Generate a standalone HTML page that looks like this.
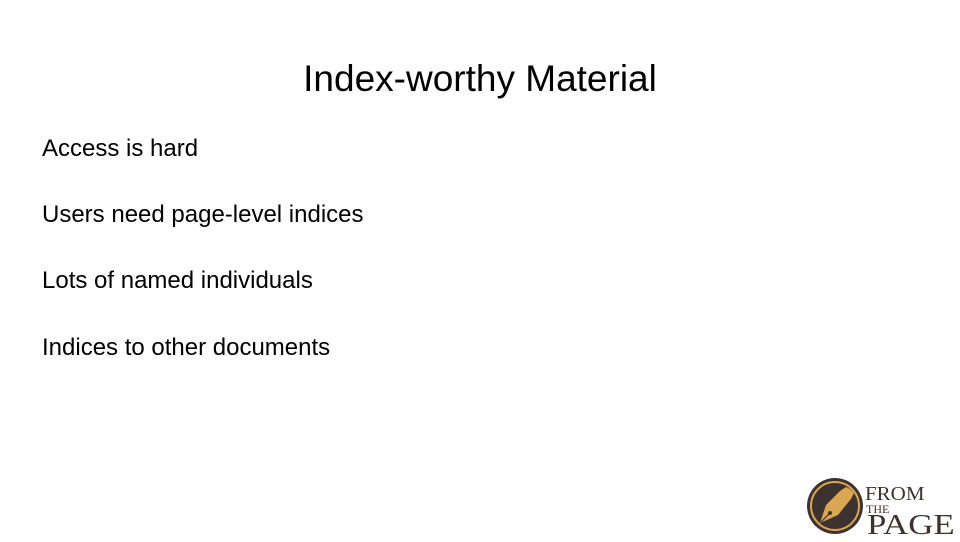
<!DOCTYPE html>
<html><head><style>
body{margin:0;width:960px;height:540px;background:#fff;position:relative;font-family:"Liberation Sans",sans-serif;overflow:hidden}
h1{position:absolute;top:58px;left:0;width:960px;text-align:center;font-weight:normal;font-size:37px;margin:0;color:#000}
.b{position:absolute;left:42px;font-size:24px;color:#000}
.l{position:absolute;font-family:"Liberation Serif",serif;color:#3d3230;font-weight:normal;transform-origin:left top}
</style></head><body>
<h1>Index-worthy Material</h1>
<div class="b" style="top:135px">Access is hard</div>
<div class="b" style="top:201px">Users need page-level indices</div>
<div class="b" style="top:267px">Lots of named individuals</div>
<div class="b" style="top:334px">Indices to other documents</div>
<svg style="position:absolute;left:806px;top:477px" width="60" height="60" viewBox="0 0 60 60">
<circle cx="29" cy="29" r="28" fill="#3d3230"/>
<circle cx="29" cy="29" r="24" fill="none" stroke="#d9a652" stroke-width="2"/>
<path d="M14 46 L20 28 L30 18 L34 14 L40 10 L44 12 L48 16 L45 22 L40 28 L32 38 Z" fill="#d9a652"/>
<circle cx="24" cy="36" r="2" fill="#3d3230"/>
<line x1="15" y1="45" x2="24" y2="36" stroke="#3d3230" stroke-width="1.2"/>
</svg>
<div class="l" style="left:865px;top:483px;font-size:20px;transform:scaleX(1.05)">FROM</div>
<div class="l" style="left:866px;top:502px;font-size:12px">THE</div>
<div class="l" style="left:867px;top:509px;font-size:29px;transform:scaleX(1.2)">PAGE</div>
</body></html>
